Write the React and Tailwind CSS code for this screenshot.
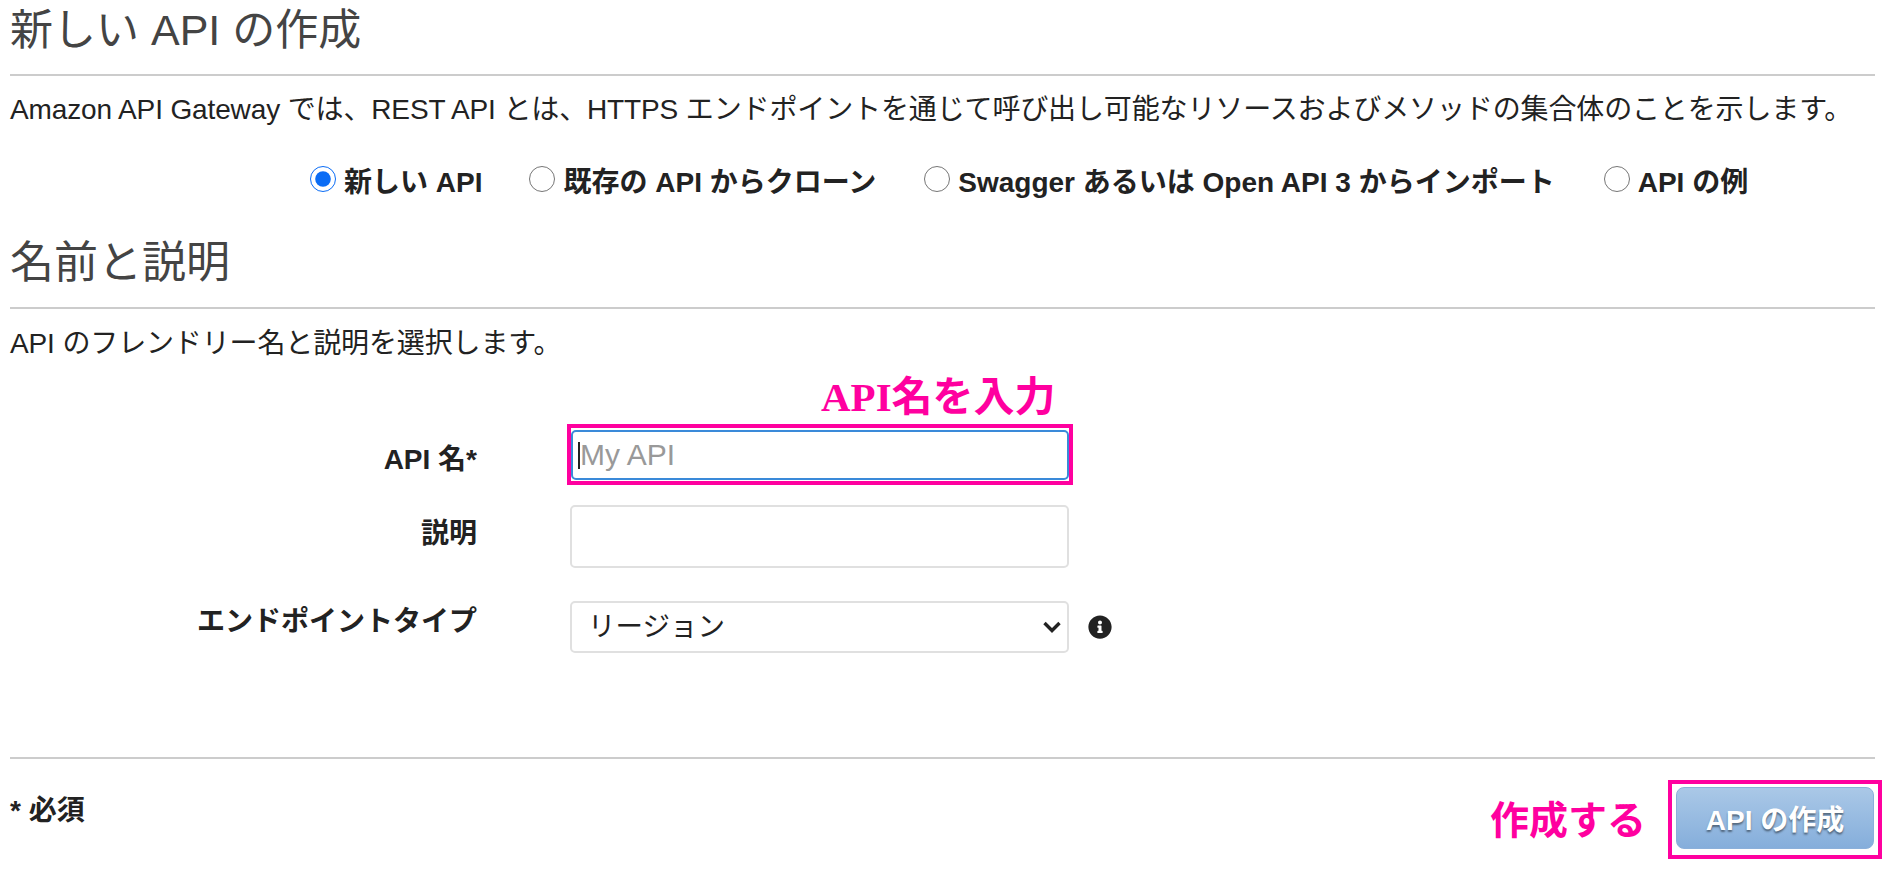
import { FaInfoCircle } from "react-icons/fa";

const sans = "font-['Liberation_Sans','Noto_Sans_CJK_JP',sans-serif]";
const annotation = "font-['Liberation_Serif','Noto_Sans_CJK_JP',serif] font-bold text-[#ff009f]";

const Radio = ({ label, checked, className }) => (
  <label className={`flex items-center gap-[8px] ${className}`}>
    <input type="radio" name="kind" defaultChecked={checked} className="m-0 h-[26px] w-[26px] -translate-y-[4px] accent-[#0a6cf5]" />
    <span>{label}</span>
  </label>
);

const App = () => {
  return (
    <div className={`h-[874px] overflow-hidden bg-white pl-[10px] pr-[12px] text-[#222] ${sans}`}>
      <div className="mr-[7px] h-[76px] border-b-2 border-[#ccc] pt-[6px]">
        <h1 className="text-[43px] font-normal leading-[48px] text-[#444]">新しい API の作成</h1>
      </div>
      <p className="mt-[14px] h-[40px] whitespace-nowrap text-[28px] leading-[40px] tracking-[-0.13px]">
        Amazon API Gateway では、REST API とは、HTTPS エンドポイントを通じて呼び出し可能なリソースおよびメソッドの集合体のことを示します。
      </p>

      <div className="mt-[33px] flex h-[40px] items-center whitespace-nowrap pl-[300px] text-[28px] font-bold">
        <Radio label="新しい API" checked />
        <Radio label="既存の API からクローン" className="ml-[47px]" />
        <Radio label="Swagger あるいは Open API 3 からインポート" className="ml-[48px]" />
        <Radio label="API の例" className="ml-[49px]" />
      </div>

      <div className="mr-[7px] mt-[34px] h-[72px] border-b-2 border-[#ccc] pt-[2px]">
        <h2 className="text-[44px] font-normal leading-[48px] text-[#444]">名前と説明</h2>
      </div>
      <p className="mt-[15px] h-[40px] text-[28px] leading-[40px] tracking-[-0.13px]">API のフレンドリー名と説明を選択します。</p>

      <div className={`ml-[811px] mt-[16px] h-[34px] whitespace-nowrap text-[41px] leading-[34px] ${annotation}`}>API名を入力</div>

      <div className="mt-[10px] flex h-[61px] items-start">
        <label className="w-[467px] pt-[16px] text-right text-[28px] font-bold leading-[40px]">API 名*</label>
        <div className="ml-[90px] h-[61px] w-[506px] border-4 border-[#ff009f] pb-[1px] pt-[2px]">
          <div className="relative h-[50px]">
            <input
              placeholder="My API"
              className="h-full w-full rounded-[5px] border-2 border-[#3a8ad9] bg-white pl-[7px] text-[30px] outline-none placeholder:text-[#999]"
            />
            <span className="absolute left-[7px] top-[12px] h-[27px] w-[2px] bg-[#222]" />
          </div>
        </div>
      </div>

      <div className="mt-[20px] flex h-[63px] items-start">
        <label className="w-[467px] pt-[9px] text-right text-[28px] font-bold leading-[40px]">説明</label>
        <input className="ml-[93px] h-[63px] w-[499px] rounded-[5px] border-2 border-[#e0e0e0] bg-white" />
      </div>

      <div className="mt-[33px] flex h-[52px] items-start">
        <label className="w-[467px] pt-[3px] text-right text-[28px] font-bold leading-[36px]">エンドポイントタイプ</label>
        <div className="relative ml-[93px] h-[52px] w-[499px]">
          <select className="h-full w-full appearance-none rounded-[5px] border-2 border-[#e0e0e0] bg-white pl-[16px] text-[27.5px] outline-none">
            <option>リージョン</option>
          </select>
          <svg viewBox="0 0 18 12" className="pointer-events-none absolute right-[8px] top-[20px] h-[12px] w-[18px]" fill="none" stroke="#222" strokeWidth="3.4">
            <path d="M1.5 2 9 9.5 16.5 2" />
          </svg>
        </div>
        <FaInfoCircle className="ml-[19px] mt-[14px] text-[24px] text-[#222]" />
      </div>

      <div className="mr-[7px] mt-[104px] border-t-2 border-[#ccc]" />

      <div className="mt-[21px] flex items-start justify-between">
        <span className="mt-[11px] text-[28px] font-bold leading-[40px]">* 必須</span>
        <div className="flex items-center gap-[22px]">
          <span className={`mt-[2px] text-[39px] leading-[40px] ${annotation}`}>作成する</span>
          <div className="border-4 border-[#ff009f] px-[4px] pb-[6px] pt-[3px]">
            <button
              type="button"
              className="h-[62px] w-[198px] rounded-[8px] border border-[#8bb0da] bg-gradient-to-b from-[#aac8e7] to-[#85aedb] pt-[6px] text-[28px] font-bold text-white [text-shadow:0_2px_2px_rgba(0,0,0,0.45)]"
            >
              API の作成
            </button>
          </div>
        </div>
      </div>
    </div>
  );
};

export default App;
